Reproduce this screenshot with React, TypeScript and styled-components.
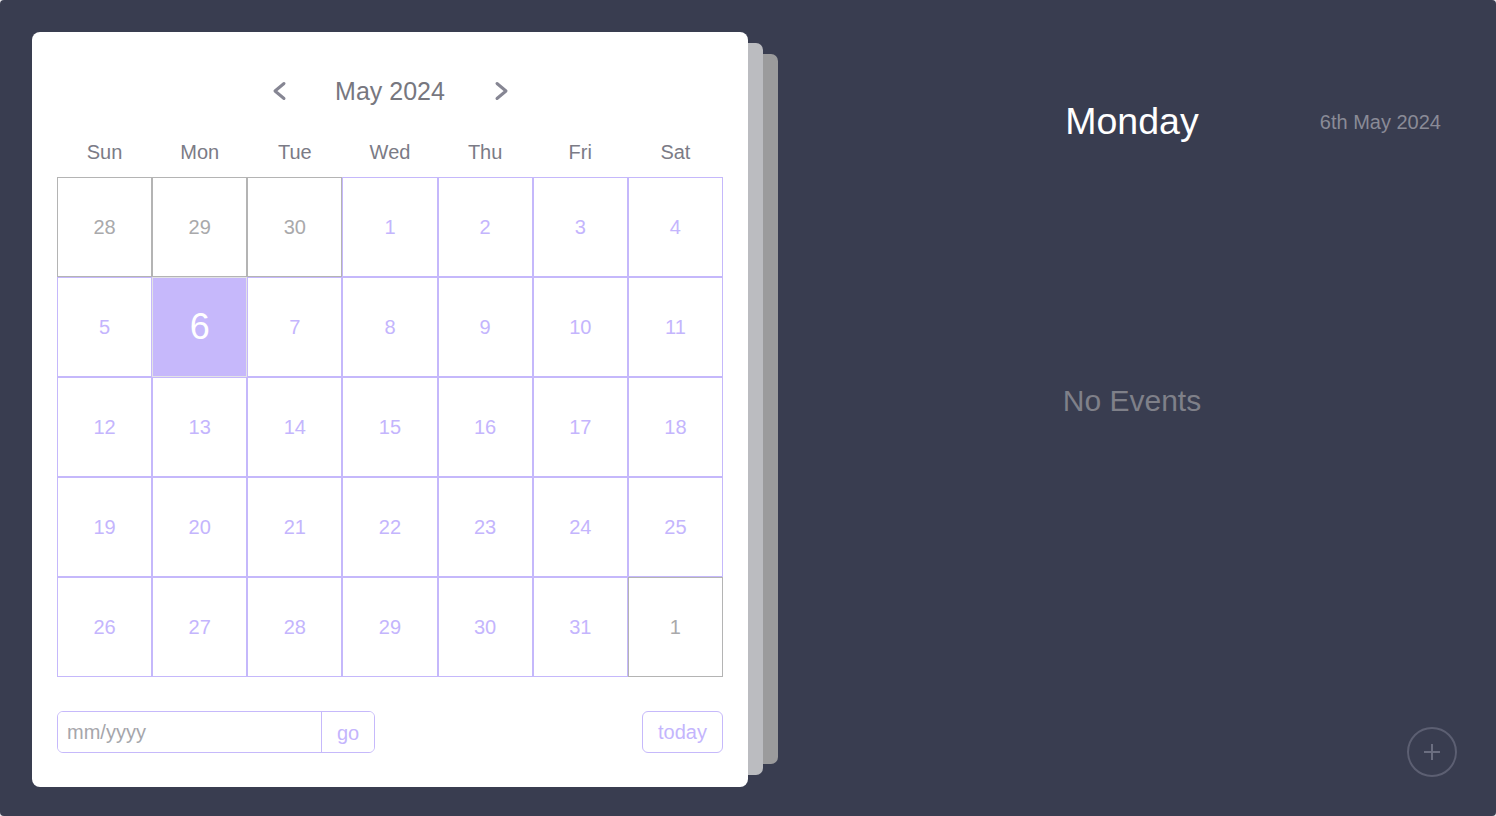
import React from "react";
import styled, { createGlobalStyle } from "styled-components";

const Global = createGlobalStyle`
  html, body { margin: 0; padding: 0; background: #e9e9ec; }
  body { font-family: "Liberation Sans", Arial, sans-serif; }
  * { box-sizing: border-box; }
`;

const Page = styled.div`
  width: 1496px;
  height: 816px;
  background: #393d50;
  border-radius: 4px;
  display: flex;
  overflow: hidden;
`;

const CardWrap = styled.div`
  position: relative;
  isolation: isolate;
  margin: 32px 20px 0 32px;
  width: 716px;
  height: 755px;
  flex-shrink: 0;
  &::before, &::after {
    content: "";
    position: absolute;
    z-index: -1;
    border-radius: 7px;
  }
  &::before {
    left: 30px; right: -15px; top: 11px; bottom: 12px;
    background: #bbbcc0;
  }
  &::after {
    left: 60px; right: -30px; top: 22px; bottom: 23px;
    background: #9b9b9c;
    z-index: -2;
  }
`;

const Card = styled.div`
  background: #ffffff;
  border-radius: 8px;
  height: 100%;
  padding: 39px 25px 34px;
  display: flex;
  flex-direction: column;
`;

const Nav = styled.div`
  height: 40px;
  display: flex;
  align-items: center;
  justify-content: center;
`;

const NavButton = styled.button`
  border: none;
  background: none;
  padding: 0;
  width: 40px;
  height: 40px;
  display: flex;
  align-items: center;
  justify-content: center;
  cursor: pointer;
`;

const MonthTitle = styled.div`
  width: 181px;
  text-align: center;
  font-size: 25px;
  color: #77777f;
`;

const DayNames = styled.div`
  margin-top: 26px;
  height: 30px;
  display: grid;
  grid-template-columns: repeat(7, 1fr);
  align-items: center;
`;

const DayName = styled.div`
  text-align: center;
  font-size: 20px;
  color: #7b7b86;
`;

const Grid = styled.div`
  margin-top: 10px;
  display: grid;
  grid-template-columns: repeat(7, 1fr);
  grid-auto-rows: 100px;
`;

const Cell = styled.div<{ $other?: boolean; $selected?: boolean }>`
  border: 1px solid ${(p) => (p.$selected ? "#e2e2e6" : p.$other ? "#b4b4b4" : "#c5b8fb")};
  background: ${(p) => (p.$selected ? "#c6b8fb" : "#ffffff")};
  display: flex;
  align-items: center;
  justify-content: center;
  font-size: ${(p) => (p.$selected ? "36px" : "20px")};
  color: ${(p) => (p.$selected ? "#ffffff" : p.$other ? "#a9a9ab" : "#c4b5fd")};
`;

const Footer = styled.div`
  margin-top: 34px;
  height: 42px;
  display: flex;
  justify-content: space-between;
`;

const InputGroup = styled.div`
  width: 318px;
  height: 42px;
  border: 1px solid #c6b9fb;
  border-radius: 6px;
  display: flex;
  overflow: hidden;
`;

const MonthInput = styled.input`
  flex: none;
  width: 263px;
  min-width: 0;
  border: none;
  outline: none;
  padding: 0 9px;
  font-family: "Liberation Sans", Arial, sans-serif;
  font-size: 20px;
  color: #777;
  &::placeholder { color: #a6a6ab; }
`;

const GoButton = styled.button`
  flex: 1;
  border: none;
  border-left: 1px solid #c6b9fb;
  background: #fff;
  font-family: "Liberation Sans", Arial, sans-serif;
  font-size: 20px;
  color: #c4b5fd;
  padding: 2px 0 0;
`;

const TodayButton = styled.button`
  width: 81px;
  height: 42px;
  border: 1px solid #c6b9fb;
  border-radius: 6px;
  background: #fff;
  font-family: "Liberation Sans", Arial, sans-serif;
  font-size: 20px;
  color: #c4b5fd;
  padding: 0;
`;

const Panel = styled.div`
  flex: 1;
  height: 816px;
  display: flex;
  flex-direction: column;
  padding: 99px 0 39px;
`;

const PanelHeader = styled.div`
  height: 44px;
  display: grid;
  grid-template-columns: 1fr auto 1fr;
  align-items: center;
`;

const DayTitle = styled.div`
  grid-column: 2;
  font-size: 37.5px;
  color: #ffffff;
`;

const DateText = styled.div`
  justify-self: end;
  padding-right: 55px;
  font-size: 20px;
  color: #8a8b97;
  margin-top: 2px;
`;

const Empty = styled.div`
  margin-top: 240px;
  line-height: 36px;
  text-align: center;
  font-size: 30px;
  color: #7f8089;
`;

const Spacer = styled.div`
  flex: 1;
`;

const PanelFooter = styled.div`
  display: flex;
  justify-content: flex-end;
  padding-right: 39px;
`;

const AddButton = styled.button`
  width: 50px;
  height: 50px;
  border-radius: 50%;
  border: 2px solid #5c5f72;
  background: transparent;
  display: flex;
  align-items: center;
  justify-content: center;
  padding: 0;
`;

const Chevron = ({ dir }: { dir: "left" | "right" }) => (
  <svg width="16" height="22" viewBox="0 0 16 22">
    <polyline
      points={dir === "left" ? "12,3.5 3,11 12,18.5" : "4,3.5 13,11 4,18.5"}
      fill="none"
      stroke="#868693"
      strokeWidth="3"
      strokeLinecap="round"
      strokeLinejoin="round"
    />
  </svg>
);

const dayNames = ["Sun", "Mon", "Tue", "Wed", "Thu", "Fri", "Sat"];

type D = { n: number; other?: boolean; selected?: boolean };
const days: D[] = [
  { n: 28, other: true },
  { n: 29, other: true },
  { n: 30, other: true },
  ...Array.from({ length: 31 }, (_, i) => ({ n: i + 1, selected: i + 1 === 6 })),
  { n: 1, other: true },
];

export default function App() {
  return (
    <>
      <Global />
      <Page>
        <CardWrap>
          <Card>
            <Nav>
              <NavButton aria-label="previous month">
                <Chevron dir="left" />
              </NavButton>
              <MonthTitle>May 2024</MonthTitle>
              <NavButton aria-label="next month">
                <Chevron dir="right" />
              </NavButton>
            </Nav>
            <DayNames>
              {dayNames.map((d) => (
                <DayName key={d}>{d}</DayName>
              ))}
            </DayNames>
            <Grid>
              {days.map((d, i) => (
                <Cell key={i} $other={d.other} $selected={d.selected}>
                  {d.n}
                </Cell>
              ))}
            </Grid>
            <Footer>
              <InputGroup>
                <MonthInput placeholder="mm/yyyy" />
                <GoButton>go</GoButton>
              </InputGroup>
              <TodayButton>today</TodayButton>
            </Footer>
          </Card>
        </CardWrap>
        <Panel>
          <PanelHeader>
            <DayTitle>Monday</DayTitle>
            <DateText>6th May 2024</DateText>
          </PanelHeader>
          <Empty>No Events</Empty>
          <Spacer />
          <PanelFooter>
            <AddButton aria-label="add event">
              <svg width="18" height="18" viewBox="0 0 18 18">
                <path d="M9 1v16M1 9h16" stroke="#6b6e80" strokeWidth="2" />
              </svg>
            </AddButton>
          </PanelFooter>
        </Panel>
      </Page>
    </>
  );
}
